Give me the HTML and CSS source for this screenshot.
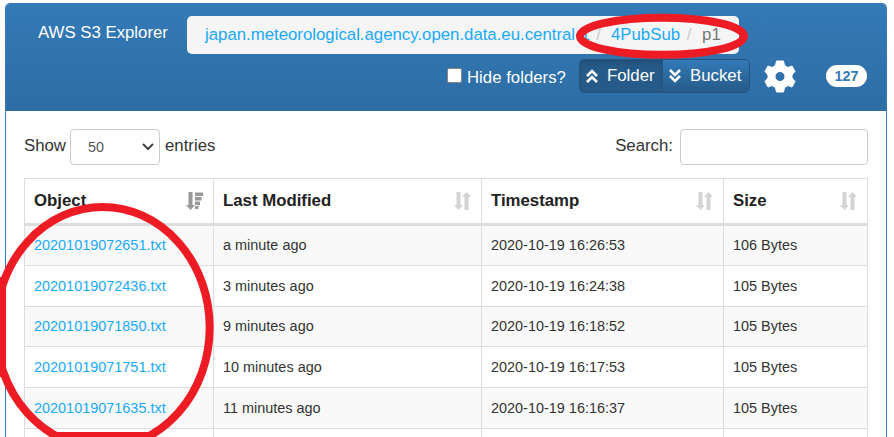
FILE: index.html
```html
<!DOCTYPE html>
<html lang="en">
<head>
<meta charset="utf-8">
<title>AWS S3 Explorer</title>
<link rel="stylesheet" href="styles.css">
</head>
<body>
<svg class="symbols" width="0" height="0">
  <symbol id="sort" viewBox="0 0 17 18"><path d="M2.500 0h4v13H9l-4.500 5L0 13h2.500zM10.500 18V5H8l4.500-5L17 5h-2.500v13z"/></symbol>
  <symbol id="sorted" viewBox="0 0 17 18"><path d="M2.500 0h4v13H9l-4.500 5L0 13h2.500zM9 0.500h8v3.500H9zM9 5h6.500v3.500H9zM9 9.500h5V13H9zM9 14h3.500v3H9z"/></symbol>
</svg>
<main class="panel">
  <header class="panel-head">
    <div class="title-row">
      <span class="title">AWS S3 Explorer</span>
      <nav class="crumbs"><a>japan.meteorological.agency.open.data.eu.central-1</a><i>/</i><a>4PubSub</a><i>/</i><span>p1</span></nav>
    </div>
    <div class="tools">
      <label class="hide"><span class="box"></span>Hide folders?</label>
      <div class="group">
        <button class="btn active"><svg width="12" height="14" viewBox="0 0 12 14"><path d="M1 7l5-5 5 5M1 13l5-5 5 5"/></svg>Folder</button>
        <button class="btn"><svg width="12" height="14" viewBox="0 0 12 14"><path d="M1 1l5 5 5-5M1 7l5 5 5-5"/></svg>Bucket</button>
      </div>
      <svg class="gear" width="32" height="33" viewBox="0 0 32 33"><path fill-rule="evenodd" d="M12.500 1h7l1 4.500 3.500 2L28 6l3 5.500-3 3.500v3l3 3.500-3 5.500-4-1.500-3.500 2-1 4.500h-7l-1-4.500-3.500-2L4 27l-3-5.500L4 18v-3l-3-3.500L4 6l4 1.500 3.500-2zM16 11.500a5 5 0 1 0 0 10 5 5 0 0 0 0-10z"/></svg>
      <span class="badge">127</span>
    </div>
  </header>
  <section class="content">
    <div class="filters">
      <label>Show <span class="select">50<svg width="12" height="8" viewBox="0 0 12 8"><path d="M1 1l5 5 5-5"/></svg></span> entries</label>
      <label>Search: <input type="text"></label>
    </div>
    <table>
      <colgroup><col class="c1"><col class="c2"><col class="c3"><col class="c4"></colgroup>
      <thead><tr>
        <th><div>Object<svg class="on"><use href="#sorted"/></svg></div></th>
        <th><div>Last Modified<svg><use href="#sort"/></svg></div></th>
        <th><div>Timestamp<svg><use href="#sort"/></svg></div></th>
        <th><div>Size<svg><use href="#sort"/></svg></div></th>
      </tr></thead>
      <tbody>
        <tr><td><a>20201019072651.txt</a></td><td>a minute ago</td><td>2020-10-19 16:26:53</td><td>106 Bytes</td></tr>
        <tr><td><a>20201019072436.txt</a></td><td>3 minutes ago</td><td>2020-10-19 16:24:38</td><td>105 Bytes</td></tr>
        <tr><td><a>20201019071850.txt</a></td><td>9 minutes ago</td><td>2020-10-19 16:18:52</td><td>105 Bytes</td></tr>
        <tr><td><a>20201019071751.txt</a></td><td>10 minutes ago</td><td>2020-10-19 16:17:53</td><td>105 Bytes</td></tr>
        <tr><td><a>20201019071635.txt</a></td><td>11 minutes ago</td><td>2020-10-19 16:16:37</td><td>105 Bytes</td></tr>
        <tr class="cut"><td></td><td></td><td></td><td></td></tr>
      </tbody>
    </table>
  </section>
</main>
<svg class="marks" width="894" height="437" viewBox="0 0 894 437">
  <ellipse cx="662" cy="36.300" rx="82" ry="18.500"/>
  <ellipse cx="102.700" cy="327.500" rx="107" ry="120.500"/>
  <path d="M2 277v100M54 436h96"/>
</svg>
</body>
</html>
```
FILE: styles.css
```css
* { box-sizing: border-box; }
body { margin: 0; background: #fff; color: #333; font: 16.8px/24px "Liberation Sans", Arial, sans-serif; }
a { color: #1aa9fb; }
.symbols { display: block; height: 0; }
.panel { width: 882px; height: 434px; margin: 3px 0 0 5px; border: 1px solid #337ab7; border-bottom: 0; border-radius: 5px 5px 0 0; overflow: hidden; }
.panel-head { height: 107px; padding: 12px 0 0 32px; background: linear-gradient(#337ab7, #2e6da4); color: #fff; }
.title-row { display: flex; align-items: flex-start; }
.title { width: 149px; padding-top: 5px; white-space: nowrap; }
.crumbs { display: flex; width: 552px; height: 38px; padding: 7px 18px 0; border-radius: 5px; background: #f5f5f5; color: #777; white-space: nowrap; }
.crumbs i { width: 22px; padding-right: 4px; color: #ccc; font-style: normal; text-align: center; }
.crumbs i:first-of-type { width: 21px; }
.tools { display: flex; align-items: flex-start; margin: 5px 0 0 409px; }
.hide { display: flex; width: 132px; padding-top: 7px; white-space: nowrap; }
.box { width: 15px; height: 15px; margin: 2px 5px 0 0; border: 1px solid #8c8682; border-radius: 2px; background: #fff; }
.group { display: flex; width: 171px; height: 34px; border: 1px solid #245580; border-radius: 5px; overflow: hidden; }
.btn { display: flex; align-items: center; width: 86px; margin: 0; padding: 0 0 0 6px; border: 0; background: linear-gradient(#337ab7, #265a88); color: #fff; font: inherit; }
.btn.active { width: 83px; background: #265a88; box-shadow: inset 0 3px 5px rgba(0,0,0,.125); }
.btn svg { margin-right: 9px; fill: none; stroke: #fff; stroke-width: 2.600; }
.gear { margin: 1px 0 0 14px; fill: #fff; stroke: #fff; stroke-width: 1; stroke-linejoin: round; }
.badge { width: 41px; height: 22px; margin: 6px 0 0 30px; border-radius: 11px; background: #fff; color: #337ab7; font-size: 14.400px; font-weight: bold; line-height: 22px; text-align: center; }
.content { padding: 18px 18px 0; }
.filters { display: flex; justify-content: space-between; height: 49px; }
.filters label { display: flex; line-height: 34px; }
.select { display: flex; align-items: center; justify-content: space-between; width: 90px; height: 36px; margin: 0 5px 0 4px; padding: 0 5px 0 17px; border: 1px solid #ccc; border-radius: 4px; color: #555; font-size: 14.400px; }
.select svg { fill: none; stroke: #444; stroke-width: 2; }
.filters input { width: 188px; height: 36px; margin-left: 7px; border: 1px solid #ccc; border-radius: 4px; }
table { width: 843.500px; table-layout: fixed; border-collapse: collapse; font-size: 14.450px; }
.c1 { width: 189px; } .c2 { width: 268px; } .c3 { width: 242px; } .c4 { width: 144px; }
th, td { border: 1px solid #ddd; padding: 0 9px; text-align: left; }
th { height: 46px; border-bottom: 3px solid #ddd; color: #222; font-size: 16.800px; }
th div { display: flex; align-items: center; justify-content: space-between; }
th svg { width: 17px; height: 18px; margin-right: 1px; fill: #d3d3d3; }
th svg.on { fill: #999; }
td { height: 40.800px; }
.cut td { height: 20px; background: #fff; }
tbody tr:nth-child(odd) { background: #f9f9f9; }
.marks { position: absolute; left: 0; top: 0; fill: none; stroke: #ed1c24; stroke-width: 8; pointer-events: none; }
```
